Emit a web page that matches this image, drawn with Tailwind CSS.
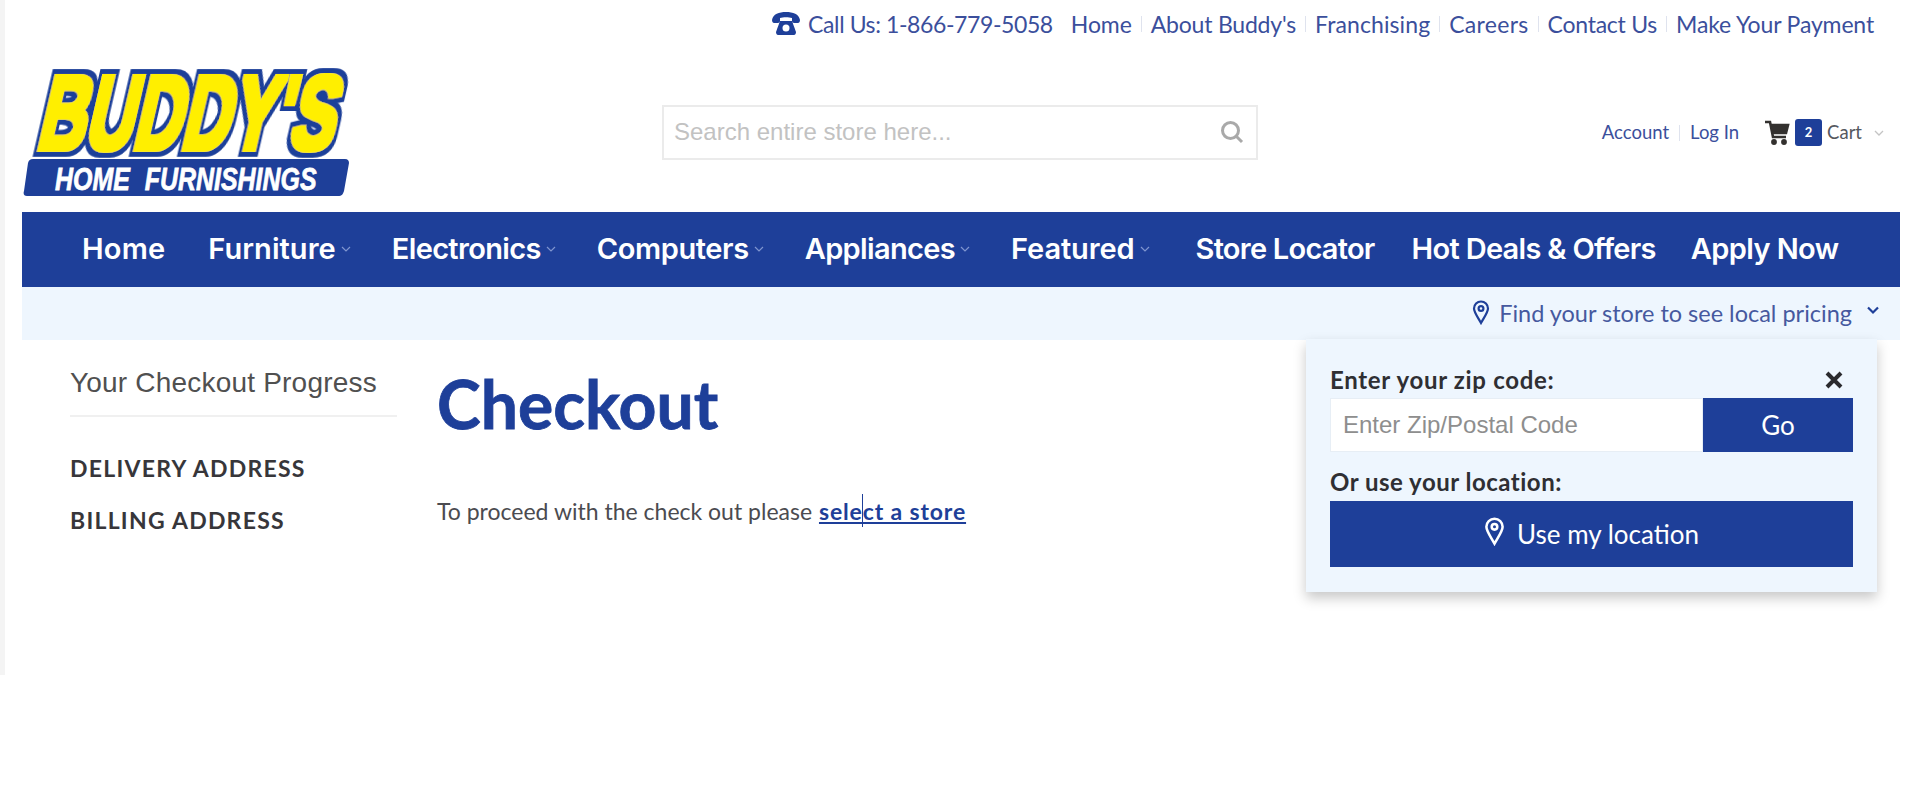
<!DOCTYPE html>
<html lang="en">
<head>
<meta charset="utf-8">
<title>Checkout</title>
<script src="https://cdn.jsdelivr.net/npm/@tailwindcss/browser@4"></script>
</head>
<body class="bg-white font-['Lato',sans-serif]">
<div class="relative h-[676px] border-l-[5px] border-[#f4f4f4] pl-[17px] pr-[20px]">
  <!-- top links -->
  <div class="-mt-px flex h-[50px] items-center justify-end pr-[26px] text-[23px] text-[#3b4f9c]">
    <svg class="mr-[7px] h-[26px] w-[30px]" viewBox="0 0 30 26" fill="#1e3f99"><path d="M1 9C2 3 8 1 15 1s13 2 14 8c0 2-1 3-2 3h-4c-1 0-2-1-2-2V7c-3-1-9-1-12 0v3c0 1-1 2-2 2H3C2 12 1 11 1 9z"/><path d="M9 10h12l4 11c0 2-1 3-2 3H7c-1 0-2-1-2-3z"/><circle cx="15" cy="17" r="3.5" fill="#fff"/></svg>
    <span class="mr-[18px] tracking-[-0.4px]">Call Us: 1-866-779-5058</span>
    <a class="tracking-[-0.1px]">Home</a><span class="mx-[9px] h-[16px] w-px bg-[#dfe3ee]"></span>
    <a class="tracking-[-0.2px]">About Buddy's</a><span class="mx-[9px] h-[16px] w-px bg-[#dfe3ee]"></span>
    <a class="tracking-[0.1px]">Franchising</a><span class="mx-[9px] h-[16px] w-px bg-[#dfe3ee]"></span>
    <a class="tracking-[0.3px]">Careers</a><span class="mx-[9px] h-[16px] w-px bg-[#dfe3ee]"></span>
    <a class="tracking-[-0.25px]">Contact Us</a><span class="mx-[9px] h-[16px] w-px bg-[#dfe3ee]"></span>
    <a class="tracking-[-0.15px]">Make Your Payment</a>
  </div>
  <!-- logo, search, account -->
  <div class="flex h-[163px] items-center">
    <svg class="-mt-[8px] h-[146px] w-[334px] shrink-0" viewBox="0 -8 334 146" aria-label="Buddy's Home Furnishings">
      <defs>
        <filter id="logofat" x="-5%" y="-15%" width="110%" height="130%">
          <feMorphology in="SourceAlpha" operator="dilate" radius="4.5" result="outer"/>
          <feFlood flood-color="#1e3f99"/><feComposite in2="outer" operator="in" result="edge"/>
          <feMorphology in="SourceGraphic" operator="dilate" radius="2" result="fat"/>
          <feMerge><feMergeNode in="edge"/><feMergeNode in="fat"/></feMerge>
        </filter>
      </defs>
      <text transform="translate(13 87) skewX(-13) scale(1.04 1.63)" fill="#ffef00" filter="url(#logofat)" font-family="Liberation Sans" font-weight="700" font-size="64">BUDDY'S</text>
      <path d="M11 97H323c3 0 4 2 4 4l-5 28c-1 3-2 5-6 5H5c-3 0-4-2-3-5l4-28c1-3 2-4 5-4z" fill="#1e3f99"/>
      <text transform="translate(33 128) scale(1.16 1.5)" word-spacing="7" fill="#fff" stroke="#fff" stroke-width="0.5" font-family="Liberation Sans" font-weight="700" font-style="italic" font-size="21.5">HOME FURNISHINGS</text>
    </svg>
    <div class="mt-[3px] ml-[306px] flex h-[55px] w-[596px] shrink-0 items-center border-2 border-[#ebebeb] pl-[10px] pr-[12px]">
      <span class="flex-1 font-['Liberation_Sans',sans-serif] text-[24px] text-[#c2c2c2]">Search entire store here...</span>
      <svg class="h-[24px] w-[24px]" viewBox="0 0 24 24" fill="none" stroke="#a9a9a9" stroke-width="3"><circle cx="10.5" cy="10.5" r="8"/><path d="M16 16l6 6"/></svg>
    </div>
    <div class="mt-[4px] ml-auto flex items-center pr-[16px] text-[18.5px] text-[#3b4f9c]">
      <a>Account</a><span class="mx-[10px] h-[16px] w-px bg-[#dfe3ee]"></span><a>Log In</a>
      <svg class="ml-[25px] h-[26px] w-[26px]" viewBox="0 0 26 26" fill="none" stroke="#33312f" stroke-width="2.6"><path d="M1 2h5l3 15h13"/><path d="M7 5h17l-2 8H8.5" fill="#33312f"/><circle cx="10" cy="22" r="1.6" fill="#33312f"/><circle cx="20" cy="22" r="1.6" fill="#33312f"/></svg>
      <span class="ml-[5px] flex h-[27px] w-[27px] items-center justify-center rounded-[3px] bg-[#1e3f99] text-[13px] font-bold text-white">2</span>
      <span class="ml-[5px] text-[#55585f]">Cart</span>
      <svg class="ml-[12px] h-[6px] w-[10px]" viewBox="0 0 10 6" fill="none" stroke="#c4c4c4" stroke-width="1.3"><path d="M1 1l4 4 4-4"/></svg>
    </div>
  </div>
  <!-- main nav -->
  <nav class="flex h-[75px] items-center bg-[#1e3f99] pb-[2px] pl-[60px] font-['Inter',sans-serif] text-[29px] leading-[36px] font-semibold text-white">
    <a class="mr-[43px] tracking-[0.2px]">Home</a>
    <a class="flex items-center tracking-[0.05px]">Furniture<svg class="ml-[5px] h-[6px] w-[10px]" viewBox="0 0 10 6" fill="none" stroke="#7f95cf" stroke-width="1.2"><path d="M1 1l4 4 4-4"/></svg></a>
    <a class="ml-[41px] flex items-center tracking-[-0.65px]">Electronics<svg class="ml-[5px] h-[6px] w-[10px]" viewBox="0 0 10 6" fill="none" stroke="#7f95cf" stroke-width="1.2"><path d="M1 1l4 4 4-4"/></svg></a>
    <a class="ml-[41px] flex items-center tracking-[-0.4px]">Computers<svg class="ml-[5px] h-[6px] w-[10px]" viewBox="0 0 10 6" fill="none" stroke="#7f95cf" stroke-width="1.2"><path d="M1 1l4 4 4-4"/></svg></a>
    <a class="ml-[41px] flex items-center tracking-[-0.65px]">Appliances<svg class="ml-[5px] h-[6px] w-[10px]" viewBox="0 0 10 6" fill="none" stroke="#7f95cf" stroke-width="1.2"><path d="M1 1l4 4 4-4"/></svg></a>
    <a class="ml-[41px] flex items-center tracking-[-0.1px]">Featured<svg class="ml-[5px] h-[6px] w-[10px]" viewBox="0 0 10 6" fill="none" stroke="#7f95cf" stroke-width="1.2"><path d="M1 1l4 4 4-4"/></svg></a>
    <a class="ml-[46px] tracking-[-0.75px]">Store Locator</a>
    <a class="ml-[37px] tracking-[-0.7px]">Hot Deals &amp; Offers</a>
    <a class="ml-[35px] tracking-[-0.6px]">Apply Now</a>
  </nav>
  <!-- store bar -->
  <div class="flex h-[53px] items-center justify-end bg-[#eef6fe] pr-[20px] text-[23.5px] text-[#46599f]">
    <svg class="mr-[9px] mb-[3px] h-[25px] w-[18px]" viewBox="0 0 18 25" fill="none" stroke="#1e3f99" stroke-width="2.2"><path d="M9 23C5 16 2 12 2 8.5a7 7 0 0 1 14 0C16 12 13 16 9 23z"/><circle cx="9" cy="8.5" r="2.4"/></svg>
    <span>Find your store to see local pricing</span>
    <svg class="mb-[6px] ml-[14px] h-[9px] w-[14px]" viewBox="0 0 14 9" fill="none" stroke="#1e3f99" stroke-width="2.2"><path d="M2 1.5l5 5 5-5"/></svg>
  </div>
  <!-- content -->
  <div class="flex">
    <aside class="ml-[48px] w-[327px] shrink-0 pt-[26px]">
      <h2 class="border-b-2 border-[#f0f0f0] pb-[15px] font-['Liberation_Sans',sans-serif] text-[28px] leading-[34px] tracking-[0.2px] text-[#505050]">Your Checkout Progress</h2>
      <p class="mt-[37px] text-[23px] leading-[28px] font-bold tracking-[1.25px] text-[#37363a]">DELIVERY ADDRESS</p>
      <p class="mt-[24px] text-[23px] leading-[28px] font-bold tracking-[1.25px] text-[#37363a]">BILLING ADDRESS</p>
    </aside>
    <main class="ml-[40px] pt-[24px]">
      <h1 class="text-[66px] leading-[80px] font-bold text-[#1e3f99] [-webkit-text-stroke:0.8px_#1e3f99]">Checkout</h1>
      <p class="mt-[53px] text-[23px] leading-[28px] text-[#4b4b50]">To proceed with the check out please <a class="ml-[1px] font-bold tracking-[0.85px] text-[#1e3f99] underline">select a store</a></p>
    </main>
  </div>
  <!-- popup -->
  <div class="absolute left-[1301px] top-[340px] h-[253px] w-[571px] bg-[#eef6fe] px-[24px] pt-[27px] shadow-[0_6px_12px_rgba(0,0,0,0.22)]">
    <div class="flex h-[28px] items-center justify-between pr-[10px] text-[24px] font-bold tracking-[0.7px] text-[#2f2f33]">
      <span>Enter your zip code:</span>
      <svg class="h-[18px] w-[18px]" viewBox="0 0 18 18" stroke="#2a2a2e" stroke-width="4"><path d="M2 2l14 14M16 2L2 16"/></svg>
    </div>
    <div class="mt-[4px] flex h-[54px]">
      <span class="flex w-[373px] items-center border border-[#e7eef5] bg-white pl-[12px] font-['Liberation_Sans',sans-serif] text-[24px] text-[#8e8e8e]">Enter Zip/Postal Code</span>
      <span class="flex flex-1 items-center justify-center bg-[#1e3f99] text-[26px] text-white">Go</span>
    </div>
    <p class="mt-[16px] text-[24px] leading-[28px] font-bold tracking-[0.5px] text-[#2f2f33]">Or use your location:</p>
    <div class="mt-[5px] flex h-[66px] items-center justify-center bg-[#1e3f99] text-[26px] text-white">
      <svg class="mr-[12px] mb-[6px] h-[29px] w-[21px]" viewBox="0 0 18 25" fill="none" stroke="#fff" stroke-width="2.2"><path d="M9 23C5 16 2 12 2 8.5a7 7 0 0 1 14 0C16 12 13 16 9 23z"/><circle cx="9" cy="8.5" r="2.4"/></svg>
      <span>Use my location</span>
    </div>
  </div>
  <!-- text caret -->
  <span class="absolute left-[857px] top-[495px] h-[33px] w-px bg-[#1e3f99]"></span>
</div>
</body>
</html>
